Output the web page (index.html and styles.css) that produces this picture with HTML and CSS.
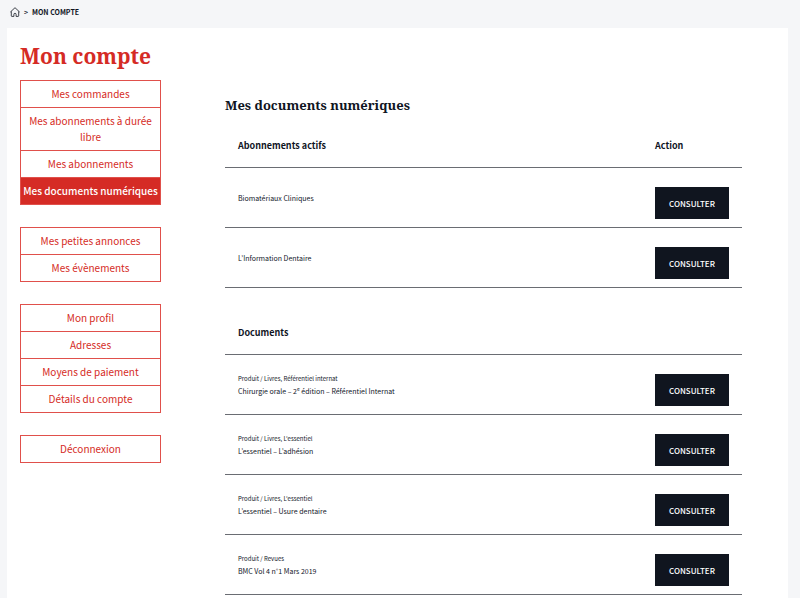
FILE: index.html
```
<!DOCTYPE html>
<html lang="fr">
<head>
    <meta charset="UTF-8">
    <meta name="viewport" content="width=device-width, initial-scale=1.0">
    <title>Mon compte</title>
    <link rel="stylesheet" href="styles.css">
</head>
<body>
    <nav class="breadcrumb" aria-label="Fil d'Ariane">
        <a href="#" aria-label="Accueil">
            <svg class="home-icon" viewBox="0 0 10 10">
                <path d="M0.4 5 L5 0.7 L9.6 5 M1.3 4.4 V8.8 Q1.3 9.4 1.9 9.4 H3.9 V7.4 A1.1 1.1 0 0 1 6.1 7.4 V9.4 H8.1 Q8.7 9.4 8.7 8.8 V4.4"/>
            </svg>
        </a>
        <span class="separator">&gt;</span>
        <span class="current">MON COMPTE</span>
    </nav>

    <main class="container">
        <h1>Mon compte</h1>
        <div class="account">
            <nav class="menu" aria-label="Mon compte">
                <ul>
                    <li><a href="#">Mes commandes</a></li>
                    <li><a href="#">Mes abonnements à durée libre</a></li>
                    <li><a href="#">Mes abonnements</a></li>
                    <li><a href="#" class="active">Mes documents numériques</a></li>
                </ul>
                <ul>
                    <li><a href="#">Mes petites annonces</a></li>
                    <li><a href="#">Mes évènements</a></li>
                </ul>
                <ul>
                    <li><a href="#">Mon profil</a></li>
                    <li><a href="#">Adresses</a></li>
                    <li><a href="#">Moyens de paiement</a></li>
                    <li><a href="#">Détails du compte</a></li>
                </ul>
                <ul>
                    <li><a href="#">Déconnexion</a></li>
                </ul>
            </nav>

            <section class="content">
                <h2>Mes documents numériques</h2>

                <table>
                    <thead>
                        <tr>
                            <th>Abonnements actifs</th>
                            <th class="action">Action</th>
                        </tr>
                    </thead>
                    <tbody>
                        <tr>
                            <td>Biomatériaux Cliniques</td>
                            <td class="action"><button type="button">CONSULTER</button></td>
                        </tr>
                        <tr>
                            <td>L’Information Dentaire</td>
                            <td class="action"><button type="button">CONSULTER</button></td>
                        </tr>
                    </tbody>
                </table>

                <table>
                    <thead>
                        <tr>
                            <th>Documents</th>
                            <th class="action"></th>
                        </tr>
                    </thead>
                    <tbody>
                        <tr>
                            <td><span class="category">Produit / Livres, Référentiel internat</span>Chirurgie orale – 2<sup>e</sup> édition – Référentiel Internat</td>
                            <td class="action"><button type="button">CONSULTER</button></td>
                        </tr>
                        <tr>
                            <td><span class="category">Produit / Livres, L'essentiel</span>L’essentiel – L’adhésion</td>
                            <td class="action"><button type="button">CONSULTER</button></td>
                        </tr>
                        <tr>
                            <td><span class="category">Produit / Livres, L'essentiel</span>L’essentiel – Usure dentaire</td>
                            <td class="action"><button type="button">CONSULTER</button></td>
                        </tr>
                        <tr>
                            <td><span class="category">Produit / Revues</span>BMC Vol 4 n°1 Mars 2019</td>
                            <td class="action"><button type="button">CONSULTER</button></td>
                        </tr>
                    </tbody>
                </table>
            </section>
        </div>
    </main>
</body>
</html>
```
FILE: styles.css
```
* {
    box-sizing: border-box;
}

body {
    margin: 0;
    background: #f5f6f8;
    color: #10151f;
    font-family: "Source Sans Pro", "Noto Sans CJK KR", sans-serif;
    font-size: 10px;
    line-height: 16px;
}

.breadcrumb {
    display: flex;
    align-items: center;
    gap: 4px;
    height: 28px;
    padding: 0 10px 4px;
    font-size: 7px;
}

.breadcrumb a {
    display: flex;
}

.home-icon {
    width: 10px;
    height: 10px;
    fill: none;
    stroke: #10151f;
    stroke-width: 0.8;
}

.separator {
    font-weight: 500;
}

.current {
    font-weight: bold;
}

.container {
    margin: 0 12px 0 7px;
    padding: 12px 46px 0 13px;
    background: #fff;
}

h1 {
    margin: 0 0 8px;
    color: #d52b25;
    font-family: "Noto Serif", "DejaVu Serif", serif;
    font-size: 21px;
    line-height: 32px;
}

.account {
    display: grid;
    grid-template-columns: 141px 1fr;
    gap: 64px;
}

.menu ul {
    margin: 0 0 22px;
    padding: 0;
    list-style: none;
    border: 1px solid #e0504b;
    border-top: none;
}

.menu a {
    display: block;
    padding: 5px 0;
    border-top: 1px solid #e0504b;
    color: #d52b25;
    text-align: center;
    text-decoration: none;
}

.menu .active {
    background: #d52b25;
    color: #fff;
    font-weight: 500;
}

.content {
    padding-top: 13px;
}

h2 {
    margin: 0 0 8px;
    font-family: "Noto Serif", "DejaVu Serif", serif;
    font-size: 13px;
    line-height: 24px;
}

table {
    width: 100%;
    margin-bottom: 24px;
    border-spacing: 0;
    table-layout: fixed;
}

th {
    padding: 13px;
    border-bottom: 1px solid #6a6d73;
    font-size: 9px;
    text-align: left;
    font-weight: bold;
}

td {
    padding: 0 13px;
    border-bottom: 1px solid #6a6d73;
    font-size: 7px;
    line-height: 12px;
}

.action {
    width: 100px;
}

td.action {
    padding: 19px 13px 8px;
}

.category {
    display: block;
    font-size: 6px;
}

sup {
    font-size: 5px;
    line-height: 0;
}

button {
    display: block;
    width: 100%;
    height: 32px;
    padding: 0;
    border: none;
    background: #10151f;
    color: #fff;
    font-family: inherit;
    font-size: 8px;
    font-weight: 500;
    cursor: pointer;
}

button:hover {
    background: #d52b25;
}
```
